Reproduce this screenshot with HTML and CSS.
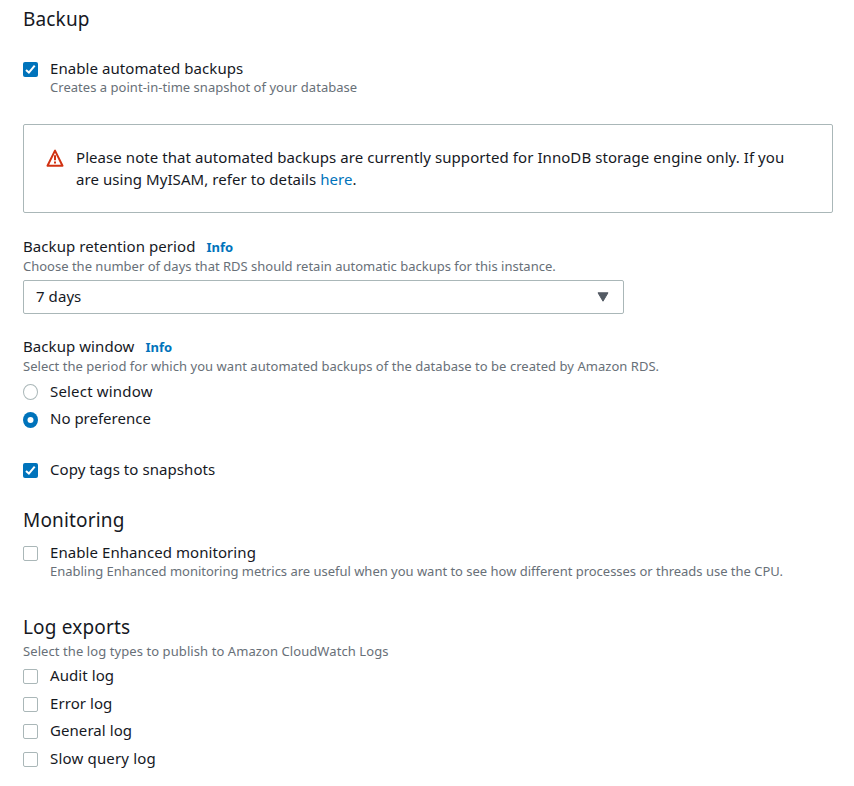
FILE: index.html
```
<!DOCTYPE html>
<html lang="en">
<head>
<meta charset="utf-8">
<title>Backup settings</title>
<link rel="stylesheet" href="styles.css">
</head>
<body>
<main class="form">
  <section class="section">
    <h2 class="heading">Backup</h2>
    <div class="option enable">
      <span class="box checked"><svg viewBox="0 0 15 15"><path d="M3 7.9 5.9 10.6 11.7 3.6"/></svg></span>
      <div><div class="label">Enable automated backups</div><div class="desc d1">Creates a point-in-time snapshot of your database</div></div>
    </div>
    <div class="alert">
      <svg class="warn" viewBox="0 0 18 18"><path class="tri" d="M9 1.6 1.5 16.8h15z"/><path class="mark" d="M9 6.2v5M9 12.6v2"/></svg>
      <p class="note"><span class="n1">Please note that automated backups are currently supported for InnoDB storage engine only. If you</span><br><span class="n2">are using MyISAM, refer to details <a class="link">here</a>.</span></p>
    </div>
    <div class="field retention">
      <div class="title"><span class="label">Backup retention period</span><a class="info">Info</a></div>
      <div class="desc d2">Choose the number of days that RDS should retain automatic backups for this instance.</div>
      <div class="select"><span class="label">7 days</span><svg class="caret" viewBox="0 0 12 10"><path d="M1 .8h10L6 9.2z"/></svg></div>
    </div>
    <div class="field window">
      <div class="title"><span class="label">Backup window</span><a class="info">Info</a></div>
      <div class="desc d3">Select the period for which you want automated backups of the database to be created by Amazon RDS.</div>
      <div class="option first"><span class="radio"></span><div class="label">Select window</div></div>
      <div class="option next"><svg class="radio-on" viewBox="0 0 15 16"><ellipse class="disc" cx="7.5" cy="8" rx="7.5" ry="8"/><circle class="dot" cx="7.5" cy="8" r="3"/></svg><div class="label">No preference</div></div>
    </div>
    <div class="option copy">
      <span class="box checked"><svg viewBox="0 0 15 15"><path d="M3 7.9 5.9 10.6 11.7 3.6"/></svg></span>
      <div class="label">Copy tags to snapshots</div>
    </div>
  </section>
  <section class="section monitoring">
    <h2 class="heading">Monitoring</h2>
    <div class="option enhanced">
      <span class="box"></span>
      <div><div class="label">Enable Enhanced monitoring</div><div class="desc d4">Enabling Enhanced monitoring metrics are useful when you want to see how different processes or threads use the CPU.</div></div>
    </div>
  </section>
  <section class="section logs">
    <h2 class="heading">Log exports</h2>
    <div class="desc d5">Select the log types to publish to Amazon CloudWatch Logs</div>
    <div class="loglist">
      <div class="option"><span class="box"></span><div class="label">Audit log</div></div>
      <div class="option"><span class="box"></span><div class="label">Error log</div></div>
      <div class="option"><span class="box"></span><div class="label">General log</div></div>
      <div class="option"><span class="box"></span><div class="label slow">Slow query log</div></div>
    </div>
  </section>
</main>
</body>
</html>
```
FILE: styles.css
```
* { box-sizing: border-box; }
body {
  margin: 0;
  background: #fff;
  color: #16191f;
  font-family: "Noto Sans", "Open Sans", sans-serif;
  font-size: 15px;
}
.form { padding: 6px 21px 0 23px; }
.heading { margin: 0; font-size: 19px; font-weight: 400; line-height: 26px; letter-spacing: .16px; }
.label { line-height: 20px; white-space: nowrap; letter-spacing: .07px; }
.slow, .first .label { letter-spacing: .18px; }
.desc { color: #687078; font-size: 13px; line-height: 18px; white-space: nowrap; }
.d1 { letter-spacing: .03px; }
.d3 { letter-spacing: .035px; }
.d4 { letter-spacing: -.018px; }
.d5 { letter-spacing: .08px; }
.option { display: flex; align-items: flex-start; gap: 12px; }
.box, .radio {
  flex: none;
  width: 15px;
  height: 15px;
  margin-top: 4px;
  border: 1px solid #aab7b8;
  border-radius: 2px;
  background: #fff;
}
.radio { height: 16px; margin-top: 3px; border-radius: 50%; }
.radio-on { flex: none; width: 15px; height: 16px; margin-top: 4px; }
.disc { fill: #0073bb; }
.dot { fill: #fff; }
.next .label { letter-spacing: 0; }
.box.checked { border: 0; background: #0073bb; }
.box svg { display: block; }
.box path { fill: none; stroke: #fff; stroke-width: 2; }
.enable { margin-top: 26px; }
.alert {
  display: flex;
  gap: 12px;
  height: 89px;
  margin-top: 28px;
  padding: 21px 0 0 22px;
  border: 1px solid #aab7b8;
  border-radius: 2px;
}
.warn { flex: none; width: 18px; height: 18px; margin-top: 3px; }
.tri, .mark { fill: none; stroke: #d13212; stroke-width: 2; }
.tri { stroke-linejoin: round; }
.note { margin: 0; line-height: 22px; white-space: nowrap; letter-spacing: .066px; }
.link, .info { color: #0073bb; }
.retention { margin-top: 23px; }
.title { display: flex; align-items: baseline; gap: 11px; height: 21px; }
.info { font-size: 13px; font-weight: 700; line-height: 20px; }
.select {
  display: flex;
  align-items: center;
  justify-content: space-between;
  width: 601px;
  height: 34px;
  margin-top: 5px;
  padding: 0 14px 2px 12px;
  border: 1px solid #aab7b8;
  border-radius: 2px;
}
.caret { width: 12px; height: 10px; margin-top: 2px; fill: #545b64; stroke: #545b64; stroke-linejoin: round; }
.window { margin-top: 22px; }
.first { margin-top: 6px; }
.next { margin-top: 7px; }
.copy { margin-top: 31px; }
.monitoring { margin-top: 28px; }
.enhanced { margin-top: 9px; }
.logs { margin-top: 34px; }
.d5 { margin-top: 2px; }
.loglist { display: flex; flex-direction: column; gap: 7.6px; margin-top: 5px; }
```
